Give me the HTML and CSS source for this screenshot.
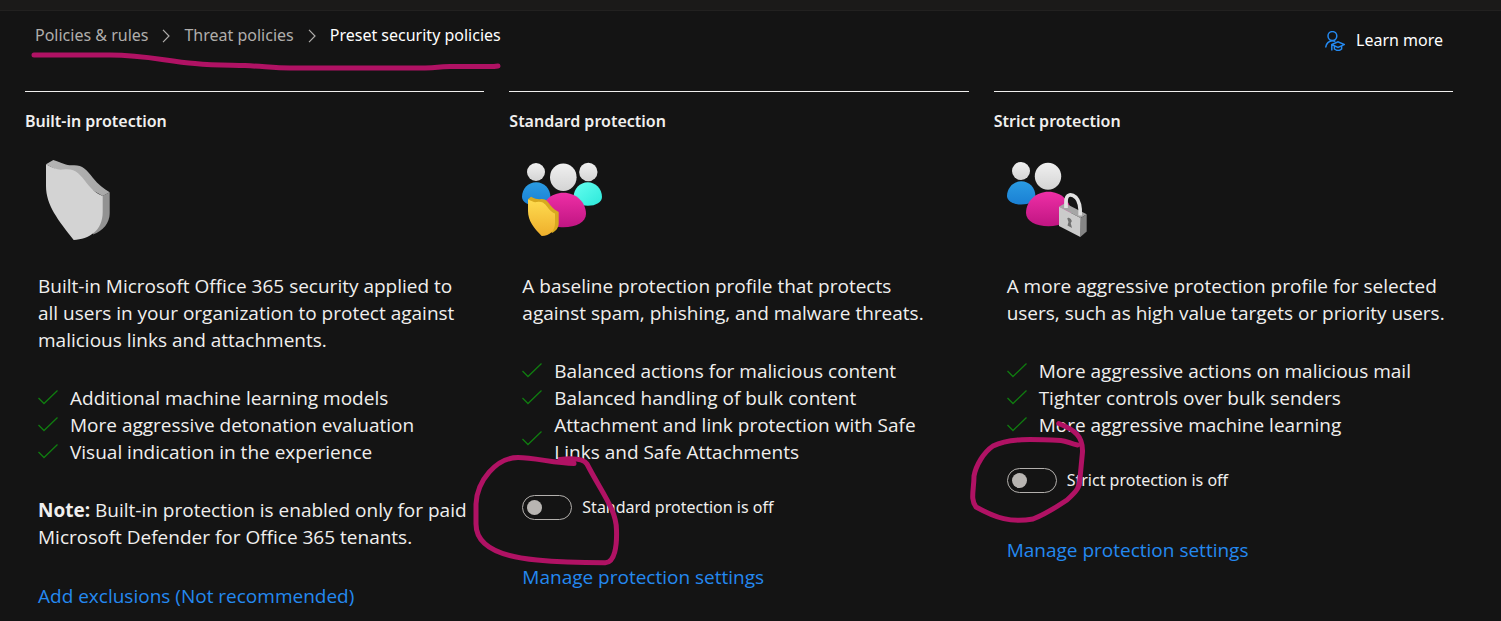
FILE: index.html
```html
<!DOCTYPE html>
<html lang="en">
<head>
<meta charset="utf-8">
<title>Preset security policies</title>
<meta name="viewport" content="width=device-width, initial-scale=1">
<link rel="stylesheet" href="styles.css">
</head>
<body>
<svg class="defs" width="0" height="0" aria-hidden="true">
  <defs>
    <linearGradient id="head" x1="0" y1="0" x2="0" y2="1"><stop offset="0" stop-color="#f0f0f0"/><stop offset="1" stop-color="#d4d4d4"/></linearGradient>
    <linearGradient id="blue" x1="0" y1="0" x2="0" y2="1"><stop offset="0" stop-color="#2a9be2"/><stop offset="1" stop-color="#1a80d4"/></linearGradient>
    <linearGradient id="cyan" x1="0" y1="0" x2="1" y2="1"><stop offset="0" stop-color="#66fff0"/><stop offset="1" stop-color="#2ce8da"/></linearGradient>
    <linearGradient id="pink" x1="0" y1="0" x2="0" y2="1"><stop offset="0" stop-color="#ee2fa6"/><stop offset="1" stop-color="#c01582"/></linearGradient>
    <linearGradient id="gold" x1="0" y1="0" x2="0" y2="1"><stop offset="0" stop-color="#ffdc50"/><stop offset="1" stop-color="#eeaf2c"/></linearGradient>
    <linearGradient id="edge" x1="0" y1="0" x2="1" y2="0"><stop offset="0" stop-color="#b4b4b4"/><stop offset="1" stop-color="#a8a8a8"/></linearGradient>
    <symbol id="check" viewBox="0 0 20 15"><path d="M.5 8 6 13.500 19.500.5" fill="none" stroke="#107c10" stroke-width="1.300"/></symbol>
  </defs>
</svg>
<div class="topbar"></div>
<header class="header">
  <nav class="breadcrumb" aria-label="Breadcrumb">
    <a href="#">Policies &amp; rules</a>
    <svg class="chevron" viewBox="0 0 8 14" aria-hidden="true"><path d="M1 .8 7 7 1 13.200"/></svg>
    <a href="#">Threat policies</a>
    <svg class="chevron" viewBox="0 0 8 14" aria-hidden="true"><path d="M1 .8 7 7 1 13.200"/></svg>
    <a href="#" class="current" aria-current="page">Preset security policies</a>
    <svg class="ink ink-underline" viewBox="31 51 470 20" aria-hidden="true"><path d="M34 55H110C145 55 165 61 195 63.500C215 65.500 230 65 245 65.500C265 66.500 275 68 290 68H425C440 68 435 66.500 450 66.500H494L498 66"/></svg>
  </nav>
  <a href="#" class="learn">
    <svg class="learn-icon" viewBox="0 0 20 20" aria-hidden="true"><g fill="none" stroke="#2489f0" stroke-width="1.500"><circle cx="7.400" cy="5" r="4.400"/><path d="M.7 16.500C1 12.500 4 9.800 7.400 9.800c1.300 0 2.200.2 3 .6M6.800 19.600V13.600L13 10.900l6.300 2.700-6.300 2.900-6-2.900M9.400 15v3c2.200 1.700 5.100 1.700 7.200 0v-3"/></g></svg>
    <span>Learn more</span>
  </a>
</header>
<main class="columns">
  <section class="column">
    <h2>Built-in protection</h2>
    <div class="content">
      <svg class="art" viewBox="0 0 80 80" aria-hidden="true">
        <path fill="url(#edge)" d="M8 4.300 15.300 0C24 3 29 5.500 34 5.300C44 4.500 48 9 55 18C60 24.500 66 29 71.700 32.300L64.700 36 30 16Z"/>
        <path fill="#929292" d="M71.700 32.300V53C71.700 63 65 71 55 74.500L60 40 64.700 35.700Z"/>
        <path fill="#d3d3d3" d="M8 4.300C15 8 20 10.300 25 9.500C37 7.500 42 14 49 23.500C54 30 59 33.500 64.700 36V52C64.700 71 51 79 35.700 80C20 60 8 45 8 26Z"/>
      </svg>
      <p>Built-in Microsoft Office 365 security applied to<br>all users in your organization to protect against<br>malicious links and attachments.</p>
      <ul class="features">
        <li><svg class="check" aria-hidden="true"><use href="#check"/></svg><span>Additional machine learning models</span></li>
        <li><svg class="check" aria-hidden="true"><use href="#check"/></svg><span>More aggressive detonation evaluation</span></li>
        <li><svg class="check" aria-hidden="true"><use href="#check"/></svg><span>Visual indication in the experience</span></li>
      </ul>
      <p class="note"><strong>Note:</strong> Built-in protection is enabled only for paid<br>Microsoft Defender for Office 365 tenants.</p>
      <a href="#" class="action">Add exclusions (Not recommended)</a>
    </div>
  </section>
  <section class="column">
    <h2>Standard protection</h2>
    <div class="content">
      <svg class="art" viewBox="0 0 80 80" aria-hidden="true">
        <circle cx="14" cy="12" r="9" fill="url(#head)"/>
        <circle cx="66.300" cy="12" r="9.200" fill="url(#head)"/>
        <path fill="url(#blue)" d="M0 37C0 29 6 22.300 14.200 22.300S28.400 29 28.400 37C28.400 42 22 45.500 14.200 45.500S0 42 0 37Z"/>
        <path fill="url(#cyan)" d="M51.600 37C51.600 29 58 22.300 65.800 22.300S80 29 80 37C80 42 74 45.800 65.800 45.800S51.600 42 51.600 37Z"/>
        <ellipse cx="41.300" cy="17.300" rx="13.300" ry="13.700" fill="url(#head)"/>
        <path fill="url(#pink)" d="M18.800 54C18.800 42 29 32.700 41.500 32.700S64 42 64 54C64 62 54 67.300 41.500 67.300S18.800 62 18.800 54Z"/>
        <path fill="#d7a91f" d="M6 39.300 9 36.700C14 39 16 39.500 19 39C24 38.500 26 42 29 46C31 48.500 34 50.500 36.700 52V63C36.700 68 34 71 30 73L14 48Z"/>
        <path fill="url(#gold)" d="M6 39.300C10 41.500 12 42.500 15 42C21 41 23 44 26.500 48.500C28.500 51 30.500 52.500 33 53.500V63C33 71 28 75.500 19.700 76C12 68 6 61 6 51Z"/>
      </svg>
      <p>A baseline protection profile that protects<br>against spam, phishing, and malware threats.</p>
      <ul class="features">
        <li><svg class="check" aria-hidden="true"><use href="#check"/></svg><span>Balanced actions for malicious content</span></li>
        <li><svg class="check" aria-hidden="true"><use href="#check"/></svg><span>Balanced handling of bulk content</span></li>
        <li><svg class="check" aria-hidden="true"><use href="#check"/></svg><span>Attachment and link protection with Safe<br>Links and Safe Attachments</span></li>
      </ul>
      <div class="switch-row">
        <input type="checkbox" role="switch" id="standard" class="switch">
        <label for="standard">Standard protection is off</label>
        <svg class="ink ink-standard" viewBox="472 453 150 115" aria-hidden="true"><path d="M574 463.500C555 463.500 535 457.500 518 457.500C496 457.500 477 481 476 504V524C476 548 503 557 537 560C562 562.500 585 562.700 605 562.700C615 563 617 545 616.500 530C616.500 510 602 493 587 464C583 458 572 458 560 459.500"/></svg>
      </div>
      <a href="#" class="action">Manage protection settings</a>
    </div>
  </section>
  <section class="column">
    <h2>Strict protection</h2>
    <div class="content">
      <svg class="art" viewBox="0 0 80 80" aria-hidden="true">
        <circle cx="14" cy="11" r="9" fill="url(#head)"/>
        <path fill="url(#blue)" d="M0 36C0 28 6 21.300 14.200 21.300S28.400 28 28.400 36C28.400 41 22 44.500 14.200 44.500S0 41 0 36Z"/>
        <ellipse cx="41" cy="16.300" rx="13.200" ry="13.500" fill="url(#head)"/>
        <path fill="url(#pink)" d="M19 53C19 41 29 31.700 41.500 31.700S64 41 64 53C64 61 54 66.300 41.500 66.300S19 61 19 53Z"/>
        <path fill="#a6a6a6" d="M52 46.700 58 43.300 79.700 54.300 73.700 58Z"/>
        <path fill="#858585" d="M73.700 58 79.700 54.300V71.500L73.300 77Z"/>
        <path fill="#cbcbcb" d="M52 46.700 73.700 58 73.300 77 52 66Z"/>
        <path fill="none" stroke="#e2e2e2" stroke-width="3.700" d="M59 48V42C59 33 65 34 69 37.500C73 41.500 73.500 47 73.200 55.500"/>
        <path fill="#707070" d="M60.300 58.500C60.500 56.500 65 58.500 64.700 61.500L63.700 63 65 68 60.500 65.500 61.500 62Z"/>
      </svg>
      <p>A more aggressive protection profile for selected<br>users, such as high value targets or priority users.</p>
      <ul class="features">
        <li><svg class="check" aria-hidden="true"><use href="#check"/></svg><span>More aggressive actions on malicious mail</span></li>
        <li><svg class="check" aria-hidden="true"><use href="#check"/></svg><span>Tighter controls over bulk senders</span></li>
        <li><svg class="check" aria-hidden="true"><use href="#check"/></svg><span>More aggressive machine learning</span></li>
      </ul>
      <div class="switch-row">
        <input type="checkbox" role="switch" id="strict" class="switch">
        <label for="strict">Strict protection is off</label>
        <svg class="ink ink-strict" viewBox="968 418 120 108" aria-hidden="true"><path d="M1057.700 423.500C1074 430 1082 436 1081.500 452L1079 478C1079 487 1076 491 1066 500C1054 508 1045 514 1032 519C1010 523 995 518 975 507C969 499 973 490 973 476C975 465 983 452 992 446C1008 438 1030 439 1060 440.500C1066 441 1070 444 1076.500 445"/></svg>
      </div>
      <a href="#" class="action">Manage protection settings</a>
    </div>
  </section>
</main>
</body>
</html>
```
FILE: styles.css
```css
* { box-sizing: border-box; }

body {
  margin: 0;
  background: #141414;
  color: #f0efee;
  font-family: "Open Sans", "Noto Sans", sans-serif;
  font-size: 19px;
  line-height: 27px;
}

a { color: inherit; text-decoration: none; }
.defs { position: absolute; }

.header,
.switch-row,
h2 {
  font-family: "Noto Sans", "Open Sans", sans-serif;
  font-size: 16px;
}

.topbar {
  height: 11px;
  background: #1b1a19;
  border-bottom: 1px solid #222120;
}

.header {
  display: flex;
  justify-content: space-between;
  padding: 11px 58px 0 35px;
  height: 80px;
}

.breadcrumb {
  position: relative;
  display: flex;
  align-items: center;
  gap: 14px;
  height: 27px;
  color: #b0aeac;
}
.breadcrumb .current { color: #fff; }

.chevron {
  width: 8px;
  height: 14px;
  fill: none;
  stroke: #b0aeac;
  stroke-width: 1.2;
}

.learn {
  display: flex;
  align-items: center;
  gap: 11px;
  height: 37px;
  color: #fff;
}
.learn-icon { width: 20px; height: 20px; }

.columns {
  display: grid;
  grid-template-columns: repeat(3, 1fr);
  align-items: start;
  gap: 25px;
  padding: 0 48px 10px 25px;
}

.column { border-top: 1px solid #f0efee; }

h2 {
  margin: 16px 0 0;
  font-weight: 600;
  line-height: 27px;
}

.content {
  display: flex;
  flex-direction: column;
  align-items: flex-start;
  padding: 25px 0 0 13px;
}

.art { width: 80px; height: 80px; }

p { margin: 33px 0 0; }
.note { margin-top: 31px; }

.features {
  margin: 31px 0 0;
  padding: 0;
  list-style: none;
}
.features li {
  display: flex;
  align-items: center;
  gap: 12px;
}
.check {
  flex: none;
  width: 20px;
  height: 15px;
  margin-bottom: 2px;
}

.switch-row {
  position: relative;
  display: flex;
  align-items: center;
  gap: 10px;
  height: 25px;
  margin-top: 29px;
}
.switch {
  appearance: none;
  display: flex;
  align-items: center;
  width: 50px;
  height: 25px;
  margin: 0;
  padding: 0 4px;
  border: 1px solid #b3b0ad;
  border-radius: 13px;
}
.switch::before {
  content: "";
  width: 15px;
  height: 15px;
  border-radius: 50%;
  background: #b8b5b2;
}
.switch:checked { justify-content: flex-end; }

.action { margin-top: 32px; color: #2489f0; }
.switch-row + .action { margin-top: 44px; }

/* Hand-drawn marks over the content */
.ink {
  position: absolute;
  fill: none;
  stroke: #b01264;
  stroke-width: 5;
  stroke-linecap: round;
  stroke-linejoin: round;
  pointer-events: none;
}
.ink-underline { left: -4px; top: 29px; width: 470px; height: 20px; }
.ink-standard { left: -50px; top: -42px; width: 150px; height: 115px; }
.ink-strict { left: -38px; top: -50px; width: 120px; height: 108px; }
```
